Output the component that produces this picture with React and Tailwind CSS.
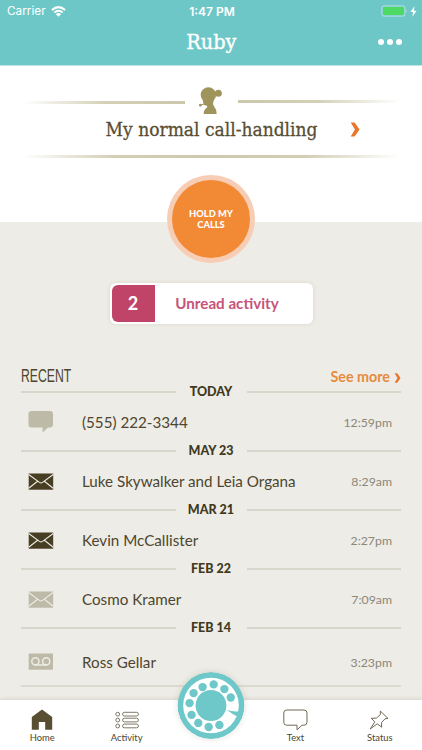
import React from 'react';

const ENTRIES = [
  { date: 'TODAY', name: '(555) 222-3344', time: '12:59pm', icon: 'chat', read: true },
  { date: 'MAY 23', name: 'Luke Skywalker and Leia Organa', time: '8:29am', icon: 'mail', read: false },
  { date: 'MAR 21', name: 'Kevin McCallister', time: '2:27pm', icon: 'mail', read: false },
  { date: 'FEB 22', name: 'Cosmo Kramer', time: '7:09am', icon: 'mail', read: true },
  { date: 'FEB 14', name: 'Ross Gellar', time: '3:23pm', icon: 'voicemail', read: true },
];

// Finger holes of the rotary dial
const HOLES = [
  [159, 76], [140, 51], [108, 37], [75, 45], [48, 63],
  [36, 93], [42, 128], [62, 152], [93, 164], [125, 158],
];

const Receptionist = () => (
  <svg className="h-[27px] w-[23px]" viewBox="28 31 69 81" fill="#9f945b">
    <ellipse cx="56" cy="54" rx="23" ry="22" />
    <circle cx="86" cy="50" r="10.5" />
    <path d="M37 62L42 83Q43 87 52 87Q55 92 49 95Q42 101 42 112H81Q81 98 73 89Q68 83 71 75L78 58H70Z" />
    <path d="M32 85.5L46 81" stroke="#9f945b" strokeWidth="3" />
    <circle cx="32" cy="85.5" r="4" />
  </svg>
);

const Chevron = ({ className }) => (
  <svg className={className} viewBox="0 0 10 15" fill="#ea7427">
    <path d="M0.7 0.5H4.6L9.5 7.4L4.6 14.5H0.7L5 7.4Z" />
  </svg>
);

const EntryIcon = ({ type, read }) => {
  const color = read ? '#bdbaa8' : '#463d22';

  if (type === 'chat') {
    return (
      <svg className="h-[23px] w-[26px]" viewBox="0 0 26 23" fill={color}>
        <path d="M3.5 0H21.8Q25 0 25 3.2V13.2Q25 16.4 21.8 16.4H20L14.6 21.6V16.4H3.5Q0.5 16.4 0.5 13.2V3.2Q0.5 0 3.5 0Z" />
      </svg>
    );
  }
  if (type === 'mail') {
    return (
      <svg className="-mt-px h-[17px] w-[26px]" viewBox="0 0 26 17">
        <rect x="0.7" y="0.5" width="24.5" height="16.2" fill={color} />
        <path d="M0.7 1.5L11.4 9.4Q13 10.5 14.6 9.4L25.2 1.5M0.7 15.2L9.6 8.3M25.2 15.2L16.4 8.3" fill="none" stroke="#edece6" strokeWidth="1.1" />
      </svg>
    );
  }
  return (
    <svg className="-mt-[2px] h-[17px] w-[26px]" viewBox="0 0 26 17">
      <rect x="0.7" y="0.5" width="24.3" height="16.2" fill={color} />
      <g fill="none" stroke="#edece6" strokeWidth="1.5">
        <circle cx="7.4" cy="8.3" r="3.6" />
        <circle cx="18.2" cy="8.3" r="3.6" />
        <path d="M7.4 12H18.2" />
      </g>
    </svg>
  );
};

const StatusBar = () => (
  <div className="grid h-[22px] grid-cols-3 items-center pl-[7px] pr-[5px] font-['Inter'] text-[12px] text-white">
    <div className="flex items-center gap-[5px]">
      <span className="pt-[2px] text-[11.8px]">Carrier</span>
      <svg className="h-[11px] w-[15px]" viewBox="0 0 15 11">
        <g fill="none" stroke="white" strokeWidth="2">
          <path d="M0.9 4.1Q7.5 -1.9 14.1 4.1" />
          <path d="M3.3 6.6Q7.5 2.9 11.7 6.6" />
        </g>
        <path d="M4.9 8.2Q7.5 6 10.1 8.2L7.5 10.8Z" fill="white" />
      </svg>
    </div>
    <span className="pt-px text-center font-semibold">1:47 PM</span>
    <div className="flex items-center justify-end gap-[2px]">
      <svg className="h-[12px] w-[27px]" viewBox="0 0 27 12">
        <rect x="0.9" y="0.9" width="23" height="10.2" rx="2.2" fill="none" stroke="#b5e3e2" />
        <rect x="2" y="2" width="20.8" height="8" rx="1" fill="#4cd964" />
        <path d="M25.2 4.2Q27 6 25.2 7.8Z" fill="#b5e3e2" />
      </svg>
      <svg className="h-[11px] w-[7px]" viewBox="0 0 7 11" fill="white">
        <path d="M4.4 0.3L0.4 6H3L2.4 10.7L6.6 4.7H4Z" />
      </svg>
    </div>
  </div>
);

const DateDivider = ({ label }) => (
  <div className="flex h-[18px] items-center">
    <div className="mt-[2px] h-[2px] flex-1 bg-[#d9d7cb]" />
    <span className="w-[71px] pt-[2px] text-center text-[12.5px] font-black leading-none text-[#403820]">{label}</span>
    <div className="mt-[2px] h-[2px] flex-1 bg-[#d9d7cb]" />
  </div>
);

const Tab = ({ label, children }) => (
  <div className="flex flex-1 flex-col items-center pt-[8px]">
    <div className="flex h-[23px] items-center justify-center">{children}</div>
    <span className="text-[9.4px] leading-[13px]">{label}</span>
  </div>
);

const Dial = () => (
  <svg className="absolute left-1/2 top-[-28px] h-[67px] w-[67px] -translate-x-1/2 rounded-full shadow-[0_0_6px_rgba(70,60,30,0.15)]" viewBox="0 0 200 200">
    <circle cx="100" cy="100" r="100" fill="#6ec7c8" />
    <circle cx="100" cy="100" r="83" fill="white" />
    <circle cx="100" cy="100" r="46" fill="#6ec7c8" />
    {HOLES.map(([x, y]) => (
      <circle key={`${x}-${y}`} cx={x} cy={y} r="12.5" fill="#6ec7c8" />
    ))}
    <path d="M147 113Q164 120 188 117L177 132Q163 126 147 113Z" fill="#6ec7c8" />
  </svg>
);

const App = () => {
  return (
    <div className="flex h-[750px] w-full flex-col overflow-hidden bg-[#edece6] font-['Lato',sans-serif] text-[#4d452e]">
      <header className="h-[66px] border-b border-[#b9e4e3] bg-[#6ec7c7]">
        <StatusBar />
        <div className="grid grid-cols-3 items-center">
          <span />
          <h1 className="scale-x-[0.92] text-center font-['DejaVu_Serif',serif] text-[21px] leading-[40px] text-white [-webkit-text-stroke:0.4px_white]">Ruby</h1>
          <div className="flex justify-end gap-[3px] pr-[20px]">
            <i className="size-[6px] rounded-full bg-white" />
            <i className="size-[6px] rounded-full bg-white" />
            <i className="size-[6px] rounded-full bg-white" />
          </div>
        </div>
      </header>

      <section className="h-[156px] shrink-0 bg-white">
        <div className="flex h-[48px] items-end px-[22px]">
          <div className="mb-[10px] h-[3px] w-[163px] bg-linear-to-r from-white via-[#d5d1b8] via-50% to-[#cbc7aa]" />
          <div className="flex flex-1 justify-center pr-[2px]"><Receptionist /></div>
          <div className="mb-[11px] h-[3px] w-[162px] bg-linear-to-l from-white via-[#d5d1b8] via-50% to-[#cbc7aa]" />
        </div>
        <div className="relative flex h-[41px] justify-center">
          <h2 className="scale-x-[0.95] whitespace-nowrap pl-px font-['DejaVu_Serif',serif] text-[18px] leading-[32px] text-[#574e33] [-webkit-text-stroke:0.3px_#574e33]">My normal call-handling</h2>
          <Chevron className="absolute right-[62px] top-[8px] h-[15px] w-[10px]" />
        </div>
        <div className="mx-[22px] h-[3px] bg-[linear-gradient(to_right,white,#d2ceb5_25%,#cdc9ae_50%,#d2ceb5_75%,white)]" />
      </section>

      <div className="z-10 mx-auto -mt-[47px] flex size-[88px] shrink-0 items-center justify-center rounded-full bg-[#f8cdb5]">
        <button className="size-[78px] rounded-full bg-[#f18935] text-[9.3px] font-black leading-[11px] text-white">HOLD MY<br />CALLS</button>
      </div>

      <button className="mx-auto mt-[20px] flex h-[41px] w-[203px] shrink-0 items-center rounded-[6px] bg-white p-[2px] font-bold shadow-[0_0_4px_rgba(90,80,50,0.13)]">
        <span className="flex h-full w-[43px] items-center justify-center rounded-l-[6px] bg-[#c04468] text-[18px] text-white">2</span>
        <span className="flex-1 pr-[11px] text-center text-[15.2px] text-[#c65478]">Unread activity</span>
      </button>

      <main className="mx-[21px] mt-[40px] h-[336px] shrink-0">
        <div className="flex h-[18px] items-center justify-between">
          <h3 className="origin-left scale-x-[0.68] pt-[7px] font-['Liberation_Sans',sans-serif] text-[18px] text-[#4d452e]">RECENT</h3>
          <div className="flex items-center gap-[4px] pt-[7px] text-[14.3px] font-bold text-[#e78b40]">
            See more
            <Chevron className="mt-[2px] h-[10px] w-[7px]" />
          </div>
        </div>
        {ENTRIES.map((entry) => (
          <div key={entry.date} className="h-[59px]">
            <DateDivider label={entry.date} />
            <div className={`flex items-center px-[7px] ${entry.date === 'FEB 14' ? 'h-[50px] pt-[3px]' : 'h-[45px]'}`}>
              <div className="w-[54px]"><EntryIcon type={entry.icon} read={entry.read} /></div>
              <span className="flex-1 text-[15.2px]">{entry.name}</span>
              <span className="pr-[2px] pt-px text-[12.3px] text-[#8c8778]">{entry.time}</span>
            </div>
          </div>
        ))}
        <div className="mt-[8px] h-[2px] bg-[#dddbd0]" />
      </main>

      <nav className="relative z-10 mt-auto flex h-[50px] shrink-0 bg-white shadow-[0_-1px_4px_rgba(90,80,50,0.15)]">
        <Tab label="Home">
          <svg className="h-[21px] w-[22px]" viewBox="0 0 22 21" fill="#584e31">
            <path d="M11 0.5L21.2 8V20.7H14.2V13H7.8V20.7H0.8V8Z" />
          </svg>
        </Tab>
        <Tab label="Activity">
          <svg className="h-[18px] w-[24px]" viewBox="0 0 24 18" fill="none" stroke="#716954" strokeWidth="0.9">
            <circle cx="2.7" cy="3.2" r="1.9" />
            <circle cx="2.7" cy="9.1" r="1.9" />
            <circle cx="2.7" cy="15" r="1.9" />
            <rect x="7.6" y="1.3" width="15.8" height="3.7" rx="1.8" />
            <rect x="7.6" y="7.2" width="15.8" height="3.7" rx="1.8" />
            <rect x="7.6" y="13.1" width="15.8" height="3.7" rx="1.8" />
          </svg>
        </Tab>
        <div className="flex-1"><Dial /></div>
        <Tab label="Text">
          <svg className="h-[22px] w-[25px]" viewBox="0 0 25 22" fill="none" stroke="#716954">
            <path d="M3.5 1H21Q24 1 24 4V13.2Q24 16.2 21 16.2H19L14 20.8V16.2H3.5Q0.8 16.2 0.8 13.2V4Q0.8 1 3.5 1Z" />
          </svg>
        </Tab>
        <Tab label="Status">
          <svg className="-ml-[2px] h-[20px] w-[20px]" viewBox="0 0 20 20" fill="none" stroke="#716954" strokeLinejoin="round">
            <path d="M11.3 1L19 8.4L16 8.8L12.5 12.6L12.7 17.2L8.2 13.8L1.2 19L5.8 11.8L2.2 8.3L7.5 8.1L11.3 4.6Z" />
          </svg>
        </Tab>
      </nav>
    </div>
  );
};

export default App;
